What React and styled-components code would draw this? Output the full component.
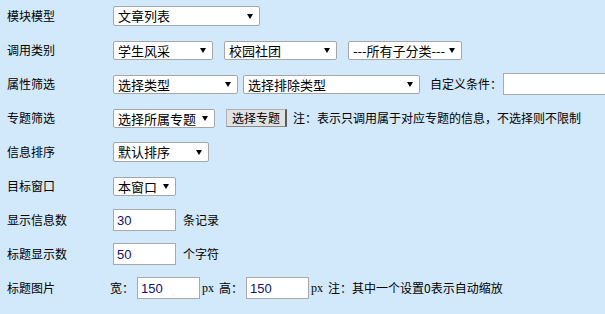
import React from "react";
import styled, { createGlobalStyle } from "styled-components";

const Global = createGlobalStyle`
  html, body { margin: 0; padding: 0; background: #d2e9fc; overflow: hidden; }
  body { font-family: "Noto Sans CJK SC", "Liberation Sans", sans-serif; color: #000; }
`;

const Form = styled.div`
  display: flex;
  flex-direction: column;
  gap: 2px;
  padding-left: 7px;
`;

const Row = styled.div`
  display: grid;
  grid-template-columns: 103px 1fr;
  align-items: center;
  height: 32px;
`;

const Label = styled.div`
  font-size: 12px;
  line-height: 16px;
  white-space: nowrap;
`;

const Content = styled.div`
  display: flex;
  align-items: center;
  white-space: nowrap;
  overflow: hidden;
  height: 100%;
`;

const SelectWrap = styled.span`
  position: relative;
  display: inline-flex;
  width: ${(p) => p.$w}px;
  height: ${(p) => p.$h || 20}px;
  margin-left: ${(p) => p.$ml ?? 0}px;
  box-sizing: border-box;
  flex: none;
`;

const SelectEl = styled.select`
  appearance: none;
  -webkit-appearance: none;
  width: 100%;
  height: 100%;
  box-sizing: border-box;
  margin: 0;
  border: 1px solid #a6a6a6;
  border-radius: 2px;
  background: #fff;
  padding: 0 14px 0 4px;
  font-family: "Noto Sans CJK SC", "Liberation Sans", sans-serif;
  font-size: 13px;
  line-height: 18px;
  color: #000;
  outline: none;
`;

const Arrow = styled.svg`
  position: absolute;
  right: 7px;
  top: 50%;
  margin-top: -2px;
  pointer-events: none;
`;

const Select = ({ w, h, ml, children }) => (
  <SelectWrap $w={w} $h={h} $ml={ml}>
    <SelectEl defaultValue={children}>
      <option>{children}</option>
    </SelectEl>
    <Arrow width="6" height="5" viewBox="0 0 6 5">
      <polygon points="0,0 6,0 3,5" fill="#000" />
    </Arrow>
  </SelectWrap>
);

const Input = styled.input`
  box-sizing: border-box;
  width: ${(p) => p.$w}px;
  height: 22px;
  margin: 0 0 0 ${(p) => p.$ml ?? 0}px;
  border: 1px solid #a9a9a9;
  background: #fff;
  padding: 0 3px;
  font-family: "Liberation Sans", Arial, sans-serif;
  font-size: 13px;
  color: #10106a;
  outline: none;
  flex: none;
`;

const Text = styled.span`
  font-size: 12px;
  line-height: 16px;
  margin-left: ${(p) => p.$ml ?? 0}px;
`;

const Unit = styled.span`
  font-family: "Liberation Serif", serif;
  font-size: 12px;
  margin-left: ${(p) => p.$ml ?? 0}px;
`;

const Button = styled.button`
  box-sizing: border-box;
  width: 61px;
  height: 18px;
  margin: 0 0 0 11px;
  padding: 0;
  background: #e1e1e1;
  border: 1px solid #b0b0b0;
  border-right: 2px solid #5a5a5a;
  border-bottom: 1px solid #8a8a8a;
  font-family: "Noto Sans CJK SC", sans-serif;
  font-size: 12px;
  line-height: 14px;
  color: #000;
  flex: none;
`;

export default function App() {
  return (
    <>
      <Global />
      <Form>
        <Row>
          <Label>模块模型</Label>
          <Content>
            <Select w={147} ml={3}>文章列表</Select>
          </Content>
        </Row>
        <Row>
          <Label>调用类别</Label>
          <Content>
            <Select w={100} h={19} ml={3}>学生风采</Select>
            <Select w={113} h={19} ml={11}>校园社团</Select>
            <Select w={114} h={19} ml={11}>---所有子分类---</Select>
          </Content>
        </Row>
        <Row>
          <Label>属性筛选</Label>
          <Content>
            <Select w={125} h={19} ml={3}>选择类型</Select>
            <Select w={177} h={19} ml={5}>选择排除类型</Select>
            <Text $ml={10}>自定义条件：</Text>
            <Input $w={160} $ml={1} />
          </Content>
        </Row>
        <Row>
          <Label>专题筛选</Label>
          <Content>
            <Select w={102} h={19} ml={3}>选择所属专题</Select>
            <Button>选择专题</Button>
            <Text $ml={6}>注：表示只调用属于对应专题的信息，不选择则不限制</Text>
          </Content>
        </Row>
        <Row>
          <Label>信息排序</Label>
          <Content>
            <Select w={96} ml={3}>默认排序</Select>
          </Content>
        </Row>
        <Row>
          <Label>目标窗口</Label>
          <Content>
            <Select w={63} h={19} ml={3}>本窗口</Select>
          </Content>
        </Row>
        <Row>
          <Label>显示信息数</Label>
          <Content>
            <Input $w={63} $ml={3} defaultValue="30" />
            <Text $ml={7}>条记录</Text>
          </Content>
        </Row>
        <Row>
          <Label>标题显示数</Label>
          <Content>
            <Input $w={63} $ml={3} defaultValue="50" />
            <Text $ml={7}>个字符</Text>
          </Content>
        </Row>
        <Row>
          <Label>标题图片</Label>
          <Content>
            <Text>宽：</Text>
            <Input $w={63} $ml={3} defaultValue="150" />
            <Unit $ml={2}>px</Unit>
            <Text $ml={5}>高：</Text>
            <Input $w={63} $ml={3} defaultValue="150" />
            <Unit $ml={2}>px</Unit>
            <Text $ml={5}>注：其中一个设置0表示自动缩放</Text>
          </Content>
        </Row>
      </Form>
    </>
  );
}
